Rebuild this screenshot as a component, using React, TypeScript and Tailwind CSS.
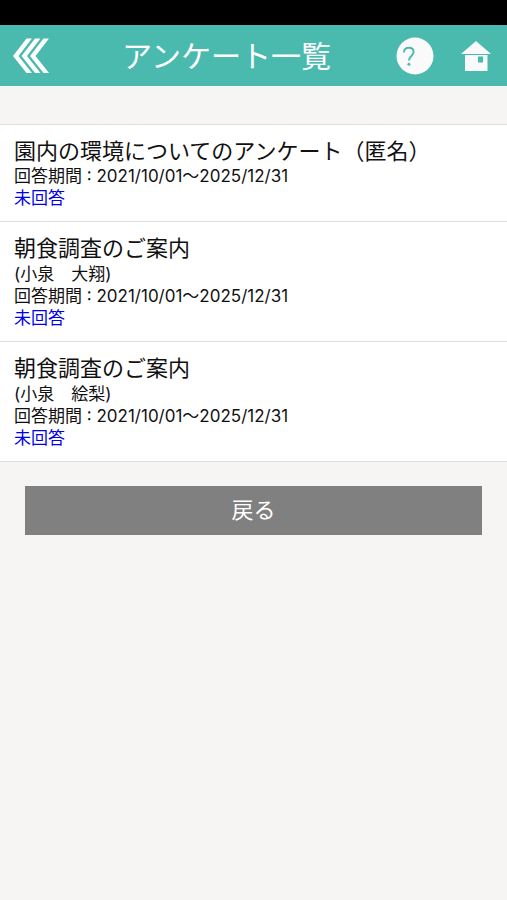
type Survey = {
  id: number
  title: string
  child?: string
  period: string
  status: string
}

const surveys: Survey[] = [
  { id: 1, title: '園内の環境についてのアンケート（匿名）', period: '2021/10/01～2025/12/31', status: '未回答' },
  { id: 2, title: '朝食調査のご案内', child: '小泉　大翔', period: '2021/10/01～2025/12/31', status: '未回答' },
  { id: 3, title: '朝食調査のご案内', child: '小泉　絵梨', period: '2021/10/01～2025/12/31', status: '未回答' },
]

function BackIcon() {
  return (
    <svg className="h-9 w-9" viewBox="0 0 36 36" fill="#fff">
      <path d="M13.500 0.500h5.500L5.500 18 19 35h-5.500L0 18z" />
      <path d="M22 0.500h5.500L14 18l13.500 17H22L8.500 18z" />
      <path d="M30.500 0.500H36L22.500 18 36 35h-5.500L17 18z" />
    </svg>
  )
}

function HelpIcon() {
  return (
    <svg className="h-[38px] w-[38px]" viewBox="0 0 38 38" fill="none">
      <circle cx="19" cy="19" r="18.500" fill="#fafafa" />
      <path d="M8 15.500c0-3 2-4.700 4.800-4.700s4.800 1.700 4.800 4.200c0 3.800-4.600 4.300-4.600 8.500" stroke="#4ab9ae" strokeWidth="1.900" />
      <circle cx="12.900" cy="27.300" r="1.500" fill="#4ab9ae" />
    </svg>
  )
}

function HomeIcon() {
  return (
    <svg className="h-[30px] w-[30px]" viewBox="0 0 30 30" fill="#fafafa">
      <path d="M15 0l15 13H0z" />
      <path fillRule="evenodd" d="M4 14h22.500v16H4zM17 15.500v6h5v-6z" />
    </svg>
  )
}

function Header() {
  return (
    <header className="flex h-[61px] items-center bg-[#4ab9ae] pr-4 pl-[13px]">
      <button type="button" aria-label="前へ" className="w-11">
        <BackIcon />
      </button>
      <h1 className="flex-1 text-center text-[30px] leading-9 text-white">アンケート一覧</h1>
      <div className="flex items-center gap-[27px]">
        <button type="button" aria-label="ヘルプ">
          <HelpIcon />
        </button>
        <a href="#home" aria-label="ホーム">
          <HomeIcon />
        </a>
      </div>
    </header>
  )
}

function SurveyRow({ survey }: { survey: Survey }) {
  return (
    <li className="border-t border-[#dedede]">
      <a href={`#survey-${survey.id}`} className="block px-3.5 py-3 text-[17px] leading-[22px] text-[#111]">
        <h2 className="text-[22px] leading-7">{survey.title}</h2>
        {survey.child && <p className="pt-px">({survey.child})</p>}
        <p>回答期間 : {survey.period}</p>
        <p className="text-[#0000f0]">{survey.status}</p>
      </a>
    </li>
  )
}

function App() {
  return (
    <div className="min-h-screen bg-[#f6f5f3] font-['Inter','Noto_Sans_CJK_JP',sans-serif]">
      {/* status bar area */}
      <div className="h-[25px] bg-black" />
      <Header />
      <main className="pt-[38px]">
        <ul className="border-b border-[#dedede] bg-white">
          {surveys.map((survey) => (
            <SurveyRow key={survey.id} survey={survey} />
          ))}
        </ul>
        <div className="px-[25px] py-6">
          <button type="button" className="h-[49px] w-full bg-[#808080] text-[22px] text-white">
            戻る
          </button>
        </div>
      </main>
    </div>
  )
}

export default App
